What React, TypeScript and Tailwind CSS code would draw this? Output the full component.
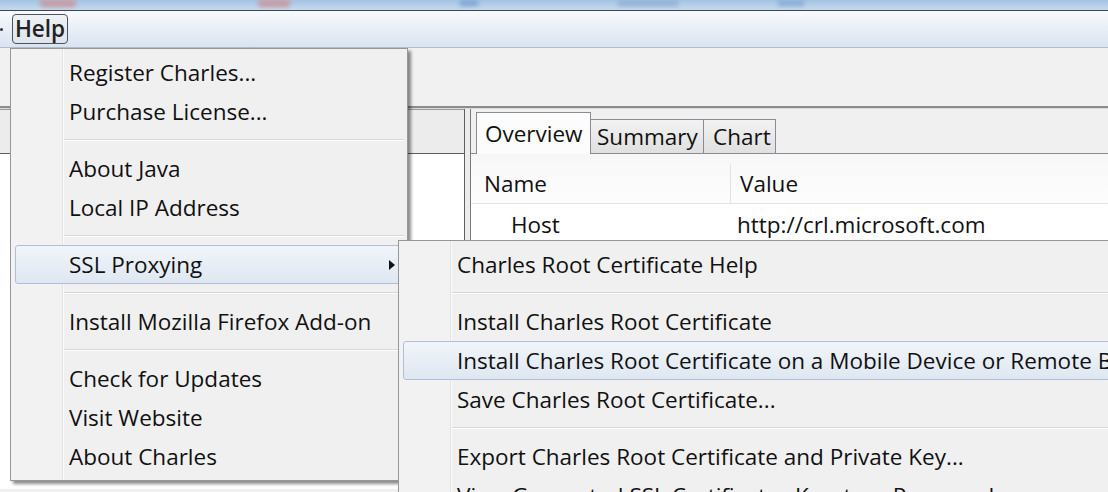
import React from "react";

type Entry = { label?: string; sep?: boolean; active?: boolean; arrow?: boolean };

const HELP_MENU: Entry[] = [
  { label: "Register Charles..." },
  { label: "Purchase License..." },
  { sep: true },
  { label: "About Java" },
  { label: "Local IP Address" },
  { sep: true },
  { label: "SSL Proxying", active: true, arrow: true },
  { sep: true },
  { label: "Install Mozilla Firefox Add-on" },
  { sep: true },
  { label: "Check for Updates" },
  { label: "Visit Website" },
  { label: "About Charles" },
];

const SSL_MENU: Entry[] = [
  { label: "Charles Root Certificate Help" },
  { sep: true },
  { label: "Install Charles Root Certificate" },
  { label: "Install Charles Root Certificate on a Mobile Device or Remote Browser", active: true },
  { label: "Save Charles Root Certificate..." },
  { sep: true },
  { label: "Export Charles Root Certificate and Private Key..." },
  { label: "View Generated SSL Certificates Keystore Password" },
];

function MenuList({ items }: { items: Entry[] }) {
  return (
    <div className="flex flex-col py-[4px]">
      {items.map((it, i) =>
        it.sep ? (
          <div key={i} className="h-[18px] flex items-center pl-[53px] pr-[3px]">
            <div className="w-full border-t border-[#d7d7d7] border-b border-b-white" />
          </div>
        ) : (
          <div
            key={i}
            className={`h-[39px] mx-[4px] flex items-center justify-between pl-[53px] pr-[7px] rounded-[3px] border whitespace-nowrap ${
              it.active
                ? "border-[#aec0d6] bg-gradient-to-b from-[#f1f5fa] to-[#dfe7f1]"
                : "border-transparent"
            }`}
          >
            <span>{it.label}</span>
            {it.arrow && (
              <svg width="6" height="10" viewBox="0 0 6 10" className="shrink-0">
                <path d="M0 0 L6 5 L0 10 Z" fill="#111" />
              </svg>
            )}
          </div>
        )
      )}
    </div>
  );
}

const menuBg =
  "bg-[linear-gradient(to_right,#f2f2f2_0,#f2f2f2_51px,#e2e2e2_51px,#e2e2e2_52px,#fbfbfb_52px,#fbfbfb_53px,#f0f0f0_53px)]";

export default function App() {
  return (
    <div className="relative w-[1108px] h-[492px] overflow-hidden bg-[#f0f0f0] text-[#111] text-[22.5px] font-['Open_Sans','Noto_Sans',sans-serif]">
      {/* blurred window title strip */}
      <div className="h-[10px] flex items-start bg-gradient-to-b from-[#a3c3e2] to-[#c6daee] overflow-hidden">
        <div className="ml-[40px] w-[36px] h-[7px] rounded-b bg-[#c99aa2] blur-[2px]" />
        <div className="ml-[182px] w-[32px] h-[7px] rounded-b bg-[#c99aa2] blur-[2px]" />
        <div className="ml-[170px] w-[18px] h-[6px] bg-[#7fa6d4] blur-[2px]" />
        <div className="ml-[140px] w-[60px] h-[6px] bg-[#93b2d6] blur-[2px]" />
        <div className="ml-[100px] w-[26px] h-[6px] bg-[#8aadd6] blur-[2px]" />
      </div>
      <div className="h-px bg-[#3d4752]" />

      {/* menu bar */}
      <div className="h-[37px] flex items-center bg-gradient-to-b from-[#f8fafd] to-[#d9e4f1] border-b border-[#b4bcc7]">
        <div className="w-[3px] h-[3px] rounded-full bg-[#333]" />
        <div className="ml-[9px] w-[56px] h-[30px] flex items-center justify-center rounded-[4px] border border-[#4d545c] bg-gradient-to-b from-[#eef2f6] to-[#dfe5ec] font-semibold text-[#222]">
          Help
        </div>
      </div>

      {/* toolbar area */}
      <div className="h-[60px] bg-[#f1f1f1] border-b-2 border-b-[#8c8c8c]" />
      <div className="h-px bg-[#d9d9d9]" />

      {/* content */}
      <div className="flex h-[380px]">
        <div className="w-[465px] flex flex-col border-r border-[#5f5f5f]">
          <div className="h-[45px] bg-[#ececec] border-t border-[#9a9a9a] border-b border-b-[#5f5f5f]" />
          <div className="flex-1 bg-white" />
        </div>
        <div className="w-[5px] bg-[#ececec]" />
        <div className="flex-1 flex flex-col border-l border-[#7a7a7a] bg-[#f0f0f0]">
          <div className="h-[45px] flex items-end pl-[5px] pt-[4px] border-b border-[#898c95]">
            <div className="w-[115px] h-[42px] -mb-px pl-[8px] flex items-center bg-[#fcfcfc] border border-b-0 border-[#898c95]">
              Overview
            </div>
            <div className="w-[113px] h-[34px] pl-[6px] flex items-center bg-gradient-to-b from-[#f2f2f2] to-[#e0e0e0] border border-l-0 border-b-0 border-[#898c95]">
              Summary
            </div>
            <div className="w-[72px] h-[34px] pl-[9px] flex items-center bg-gradient-to-b from-[#f2f2f2] to-[#e0e0e0] border border-l-0 border-b-0 border-[#898c95]">
              Chart
            </div>
          </div>
          <div className="flex-1 bg-white flex flex-col">
            <div className="h-[50px] pt-[10px] flex bg-gradient-to-b from-[#f7f7f7] to-[#fdfdfd] border-b border-[#e4e4e4]">
              <div className="w-[260px] pl-[13px] flex items-center border-r border-[#e2e2e2]">Name</div>
              <div className="pl-[9px] flex items-center">Value</div>
            </div>
            <div className="h-[38px] pt-[3px] flex">
              <div className="w-[260px] pl-[40px] flex items-center">Host</div>
              <div className="pl-[6px] flex items-center">http://crl.microsoft.com</div>
            </div>
          </div>
        </div>
      </div>

      {/* Help dropdown */}
      <div
        className={`absolute left-[10px] top-[48px] w-[398px] h-[433px] border border-[#979797] shadow-[3px_3px_3px_rgba(0,0,0,0.45)] ${menuBg}`}
      >
        <MenuList items={HELP_MENU} />
      </div>

      {/* SSL Proxying submenu */}
      <div
        className={`absolute left-[398px] top-[240px] w-[780px] h-[300px] border border-[#979797] shadow-[3px_3px_3px_rgba(0,0,0,0.45)] ${menuBg}`}
      >
        <MenuList items={SSL_MENU} />
      </div>
    </div>
  );
}
